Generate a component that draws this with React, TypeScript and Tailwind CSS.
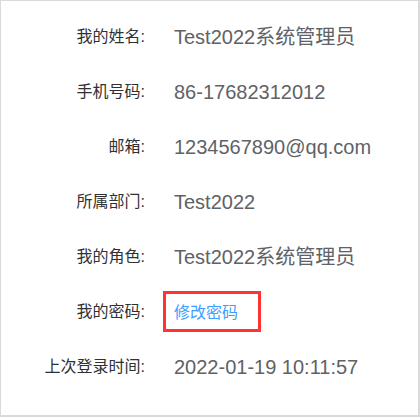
const rows = [
  { label: "我的姓名:", value: "Test2022系统管理员" },
  { label: "手机号码:", value: "86-17682312012" },
  { label: "邮箱:", value: "1234567890@qq.com" },
  { label: "所属部门:", value: "Test2022" },
  { label: "我的角色:", value: "Test2022系统管理员" },
  { label: "我的密码:", value: "", link: "修改密码" },
  { label: "上次登录时间:", value: "2022-01-19 10:11:57" },
];

export default function App() {
  return (
    <div
      className="w-[420px] h-[417px] bg-white border-l border-t border-r-2 border-b-2 border-[#dadada] pt-[8px]"
      style={{ fontFamily: '"Liberation Sans", Arial, "Noto Sans CJK SC", sans-serif' }}
    >
      {rows.map((row) => (
        <div key={row.label} className="flex items-stretch h-[55px]">
          <div className="w-[144px] shrink-0 flex items-center justify-end text-[16px] text-[#303133]">
            {row.label}
          </div>
          <div className="relative ml-[29px] flex items-center">
            {row.link ? (
              <>
                <a className="text-[16px] text-[#409eff] cursor-pointer pt-[3px]">{row.link}</a>
                <span className="absolute left-[-11px] top-[7px] w-[98px] h-[41px] border-[3px] border-[#ff3333]" />
              </>
            ) : (
              <span className="text-[20px] text-[#606266] whitespace-nowrap">{row.value}</span>
            )}
          </div>
        </div>
      ))}
    </div>
  );
}
